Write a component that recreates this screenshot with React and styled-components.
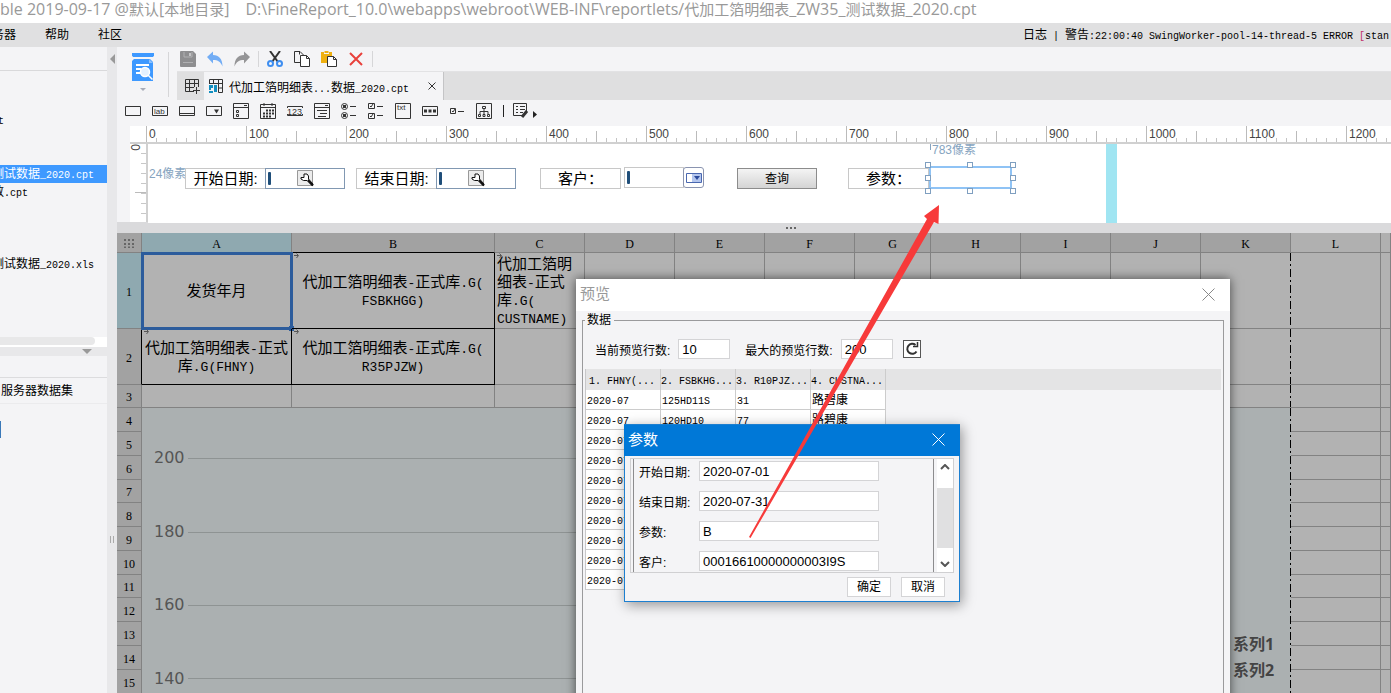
import React from 'react';
import styled, { createGlobalStyle, css } from 'styled-components';

const GlobalStyle = createGlobalStyle`
  * {
    box-sizing: border-box;
  }
  body {
    margin: 0;
    overflow: hidden;
    font-family: 'Liberation Sans', 'Noto Sans CJK SC', sans-serif;
    font-size: 12px;
    color: #000;
    background-color: #f4f4f6;
  }
  button, input {
    font: inherit;
    color: inherit;
    margin: 0;
    padding: 0;
  }
`;

const Page = styled.div`
  position: relative;
  display: flex;
  flex-direction: column;
  height: 100vh;
  overflow: hidden;
`;

const Latin = styled.span`
  font-family: 'Liberation Mono', monospace;
  font-size: ${({ $big }) => ($big ? '13px' : '10px')};
  line-height: 0;
  white-space: pre;
`;

const TitleLatin = styled.span`
  font-size: 16px;
`;

// half-width characters go in a face of their own, the rest stays as it is
const Mixed = ({ children, big, as: Part = Latin }) =>
  children
    .split(/([\x20-\x7e]+)/)
    .filter(Boolean)
    .map((part, i) =>
      /[\x20-\x7e]/.test(part) ? (
        <Part key={i} $big={big}>
          {part}
        </Part>
      ) : (
        <React.Fragment key={i}>{part}</React.Fragment>
      )
    );

/* title and menu */
const TitleBar = styled.header`
  display: flex;
  flex: none;
  gap: 16px;
  height: 23px;
  line-height: 18px;
  background-color: #fff;
  color: #999;
  font-family: 'Open Sans', 'Noto Sans CJK SC', sans-serif;
  font-size: 15px;
  white-space: pre;
`;

const MenuBar = styled.nav`
  display: flex;
  flex: none;
  align-items: center;
  justify-content: space-between;
  height: 24px;
  background-color: #e0e0e1;
  white-space: nowrap;
  overflow: hidden;
`;

const MenuList = styled.div`
  display: flex;
  gap: 29px;
  margin-left: -20px;
`;

const MenuItem = styled.button`
  border: 0;
  background: none;
  line-height: 16px;
`;

const LogText = styled.div`
  display: flex;
  width: 368px;
  line-height: 16px;
  white-space: pre;
  .stack {
    color: #c0306a;
  }
`;

const Workspace = styled.div`
  display: flex;
  flex: 1;
  min-height: 0;
`;

/* left side */
const SidePanel = styled.aside`
  display: flex;
  flex-direction: column;
  flex: none;
  width: 107px;
  overflow: hidden;
`;

const SideTop = styled.div`
  flex: none;
  height: 24px;
  border-bottom: 1px solid #d9d9db;
`;

const FileList = styled.ul`
  flex: none;
  height: 266px;
  margin: 0;
  padding: 40px 0 0;
  list-style: none;
`;

const FileRow = styled.li`
  height: 18px;
  line-height: 18px;
  text-indent: ${({ $cut }) => ($cut ? '-2px' : '-8px')};
  white-space: nowrap;
  ${({ $selected }) =>
    $selected &&
    css`
      background-color: #3e99ff;
      color: #fff;
    `}
`;

const ScrollTrack = styled.div`
  flex: none;
  height: 10px;
  background-color: #fff;
  &::before {
    content: '';
    display: block;
    width: 95px;
    height: 8px;
    border-radius: 0 4px 4px 0;
    background-color: #e8e8e9;
  }
`;

const SideSplit = styled.div`
  display: flex;
  flex: none;
  justify-content: flex-end;
  align-items: center;
  height: 9px;
  padding-right: 15px;
  background-color: #e8e8ea;
`;

const DataTabs = styled.div`
  flex: none;
  height: 48px;
  border-bottom: 1px solid #ebebed;
  div {
    height: 22px;
    border-bottom: 1px solid #dcdcde;
  }
  p {
    margin: 0;
    padding-left: 1px;
    line-height: 26px;
    white-space: nowrap;
  }
`;

const DataMark = styled.div`
  width: 1px;
  height: 17px;
  margin-top: 17px;
  background-color: #3a78b8;
`;

const Gutter = styled.div`
  display: flex;
  flex-direction: column;
  justify-content: space-between;
  align-items: center;
  flex: none;
  width: 10px;
  padding: 7px 0 150px;
  background-color: #e8e8ea;
`;

/* toolbars */
const Main = styled.main`
  display: flex;
  flex-direction: column;
  flex: 1;
  min-width: 0;
`;

const TopTools = styled.div`
  display: flex;
  flex: none;
  height: 53px;
`;

const PreviewButton = styled.button`
  flex: none;
  width: 52px;
  height: 45px;
  margin: 5px 8px 0 0;
  border: 0;
  border-right: 1px solid #d6d6d8;
  background: none;
`;

const ToolRows = styled.div`
  flex: 1;
  min-width: 0;
`;

const ToolRow = styled.div`
  display: flex;
  align-items: center;
  height: 24px;
  margin-left: -3px;
`;

const WidgetRow = styled(ToolRow)`
  flex: none;
  height: 26px;
  margin: 0;
  padding: 0 0 4px 2px;
`;

const IconButton = styled.button`
  display: flex;
  align-items: center;
  justify-content: center;
  flex: none;
  width: 27px;
  height: 22px;
  border: 0;
  background: none;
`;

const ToolSep = styled.span`
  width: 1px;
  height: ${({ $dark }) => ($dark ? '12px' : '16px')};
  margin: ${({ $dark }) => ($dark ? '0 7px 0 6px' : '0 2px 0 3px')};
  background-color: ${({ $dark }) => ($dark ? '#222' : '#d6d6d8')};
`;

const TabRow = styled.div`
  display: flex;
  height: 29px;
  border-top: 1px solid #e2e2e4;
  background-color: #dfdfe0;
`;

const NewTab = styled(IconButton)`
  height: 28px;
  padding-left: 4px;
`;

const Tab = styled.div`
  display: flex;
  align-items: center;
  width: 240px;
  padding: 0 5px;
  gap: 6px;
  background-color: #f4f4f6;
  border-right: 1px solid #c4c4c6;
  white-space: nowrap;
  button {
    width: 12px;
    margin-left: auto;
    border: 0;
    background: none;
    line-height: 0;
  }
`;

/* parameter form */
const Ruler = styled.div`
  display: flex;
  flex: none;
  height: 18px;
  margin-left: 13px;
  padding-left: 16px;
  overflow: hidden;
  background-color: #fff;
  border-bottom: 2px solid #d0d0d0;
`;

const RulerPart = styled.div`
  flex: none;
  width: 100px;
  padding-left: 3px;
  line-height: 17px;
  color: #444;
  background-image: linear-gradient(#bbb, #bbb), linear-gradient(#bbb, #bbb),
    repeating-linear-gradient(90deg, #c4c4c4 0 1px, transparent 1px 10px);
  background-size: 1px 100%, 1px 11px, 100% 4px;
  background-position: 0 0, 50px 100%, 0 100%;
  background-repeat: no-repeat;
`;

const FormArea = styled.div`
  display: flex;
  flex: none;
  height: 79px;
  padding-left: 13px;
`;

const SideRuler = styled.div`
  flex: none;
  width: 18px;
  border-right: 2px solid #d0d0d0;
  background-color: #fff;
  background-image: linear-gradient(#bbb, #bbb),
    repeating-linear-gradient(transparent 0 9px, #c8c8c8 9px 10px);
  background-size: 11px 1px, 5px 100%;
  background-position: 100% 48px, 100% 0;
  background-repeat: no-repeat;
  span {
    display: block;
    width: 10px;
    line-height: 10px;
    color: #444;
    writing-mode: vertical-rl;
    text-orientation: sideways;
  }
`;

const Canvas = styled.div`
  position: relative;
  flex: 1;
  overflow: hidden;
  background-color: #fff;
`;

const Placed = styled.div`
  position: absolute;
  left: ${({ $x }) => $x}px;
  top: ${({ $y = 24 }) => $y}px;
`;

const FormLabel = styled.label`
  display: block;
  width: 81px;
  height: 21px;
  border: 1px solid #c8c8c8;
  font-size: 15px;
  line-height: 19px;
  text-align: center;
  white-space: nowrap;
`;

const FormField = styled.div`
  display: flex;
  align-items: center;
  gap: 26px;
  width: ${({ $narrow }) => ($narrow ? '60px' : '80px')};
  height: 21px;
  padding-left: 2px;
  border: 1px solid ${({ $narrow }) => ($narrow ? '#c8c8c8' : '#8198b2')};
  input {
    width: 3px;
    height: 13px;
    border: 0;
    border-radius: 1px;
    background-color: #1f4e79;
  }
`;

const DropButton = styled.button`
  display: flex;
  align-items: center;
  justify-content: center;
  width: 21px;
  height: 21px;
  border: 1px solid #8a94b0;
  border-radius: 3px;
  background-color: #fff;
`;

const QueryButton = styled.button`
  width: 80px;
  height: 21px;
  border: 1px solid #8c8c8c;
  background: linear-gradient(#f4f4f4, #d4d4d4);
  line-height: 18px;
`;

const Measure = styled.span`
  color: #86a4c0;
  line-height: 14px;
  white-space: nowrap;
`;

const SelectedInput = styled.input`
  display: block;
  width: 83px;
  height: 23px;
  border: 2px solid #8fc3f5;
  background-color: #fff;
  outline: none;
`;

const Handle = styled.span`
  position: absolute;
  left: ${({ $x }) => $x}px;
  top: ${({ $y }) => $y}px;
  width: 6px;
  height: 6px;
  border: 1px solid #7f9fc0;
  background-color: #fff;
`;

const FormEdge = styled.div`
  position: absolute;
  left: 958px;
  top: 0;
  bottom: 0;
  width: 11px;
  background-color: #a0e5f2;
`;

const Splitter = styled.div`
  flex: none;
  display: flex;
  justify-content: center;
  align-items: center;
  gap: 2px;
  height: 11px;
  margin-top: -1px;
  padding-left: 74px;
  background-color: #dadadc;
  i {
    width: 2px;
    height: 2px;
    background-color: #666;
  }
`;

/* report sheet */
const SheetWrap = styled.div`
  flex: 1;
  min-height: 0;
  overflow: hidden;
  background-color: #b2b2b2;
`;

const Sheet = styled.table`
  width: 100%;
  table-layout: fixed;
  border-spacing: 0;
  th,
  td {
    padding: 0;
    border: 0 solid #828282;
    border-width: 0 1px 1px 0;
    overflow: hidden;
  }
`;

const Head = styled.th`
  height: ${({ $h = 20 }) => $h}px;
  background-color: ${({ $on, $out }) => ($on ? '#8fa9b0' : $out ? '#b0b0b0' : '#a2a2a2')};
  font: 12px 'Liberation Serif', serif;
  line-height: 16px;
  &&& {
    padding-top: 2px;
    ${({ $under }) => $under && 'border-bottom-color: #000;'}
    ${({ $side }) => $side && 'border-right-color: #000;'}
  }
`;

const Cell = styled.td`
  position: relative;
  font-size: 15px;
  line-height: 18px;
  text-align: ${({ $left }) => ($left ? 'left' : 'center')};
  white-space: nowrap;
  &&& {
    overflow: visible;
    ${({ $boxed }) => $boxed && 'border-color: #000;'}
    ${({ $left }) => $left && 'padding-left: 2px;'}
    ${({ $edge }) =>
      $edge &&
      css`
        border-right: 0;
        background-image: repeating-linear-gradient(
          #000 0 8px,
          transparent 8px 11px,
          #000 11px 13px,
          transparent 13px 16px
        );
        background-size: 1px 100%;
        background-position: 100% 0;
        background-repeat: no-repeat;
      `}
  }
`;

const ChartCell = styled(Cell)`
  background-color: #abb0b1;
  vertical-align: top;
  svg {
    display: block;
  }
`;

const Selection = styled.div`
  position: absolute;
  inset: -1px -2px -2px -1px;
  border: 3px solid #2c5c9c;
  &::after {
    content: '';
    position: absolute;
    right: -4px;
    bottom: -4px;
    width: 5px;
    height: 5px;
    background-color: #2c5c9c;
  }
`;

const Expand = styled.svg`
  position: absolute;
  left: 1px;
  top: 0;
`;

/* windows */
const PreviewWindow = styled.section`
  position: absolute;
  left: 576px;
  top: 279px;
  bottom: -30px;
  display: flex;
  flex-direction: column;
  width: 654px;
  padding: 0 6px;
  background-color: #f4f4f6;
  box-shadow: 0 0 10px rgba(0, 0, 0, 0.6);
`;

const WindowTitle = styled.div`
  display: flex;
  flex: none;
  align-items: center;
  justify-content: space-between;
  height: ${({ $active }) => ($active ? '31px' : '32px')};
  margin: 0 -6px;
  padding: 0 15px 2px 4px;
  background-color: ${({ $active }) => ($active ? '#0078d7' : '#fff')};
  color: ${({ $active }) => ($active ? '#fff' : '#999')};
  font-size: 15px;
  line-height: 20px;
  button {
    border: 0;
    background: none;
    line-height: 0;
  }
`;

const Group = styled.fieldset`
  flex: 1;
  min-width: 0;
  margin: 0;
  padding: 0 2px;
  border: 1px solid #9a9a9c;
  legend {
    padding: 0 3px 0 2px;
    line-height: 18px;
  }
`;

const CountRow = styled.div`
  display: flex;
  align-items: center;
  padding: 10px;
  gap: 8px;
  input {
    width: 52px;
    margin-right: 7px;
  }
`;

const TextInput = styled.input`
  height: 20px;
  padding: 0 3px;
  border: 1px solid #d4d4d6;
  background-color: #fff;
  font-size: 13px;
  outline: none;
`;

const RefreshButton = styled.button`
  width: 18px;
  height: 18px;
  margin-left: -5px;
  border: 1px solid #555;
  background-color: #fff;
  line-height: 0;
`;

const DataScroll = styled.div`
  border-left: 1px solid #c8c8ca;
  background-image: linear-gradient(#e4e4e5, #e4e4e5);
  background-size: 100% 21px;
  background-repeat: no-repeat;
`;

const DataTable = styled.table`
  width: 300px;
  table-layout: fixed;
  border-spacing: 0;
  th,
  td {
    height: 20px;
    padding: 0 0 0 1px;
    border-right: 1px solid #ccc;
    line-height: 16px;
    text-align: left;
    font-weight: normal;
    white-space: nowrap;
    overflow: hidden;
  }
  th {
    height: 21px;
    padding-left: 0;
  }
  th:first-child {
    padding-left: 3px;
  }
  td {
    border-bottom: 1px solid #ccc;
    background-color: #fff;
  }
`;

const ParamWindow = styled.section`
  position: absolute;
  left: 624px;
  top: 424px;
  width: 336px;
  padding: 0 5px 4px;
  border: 1px solid #1c7fd0;
  background-color: #f4f4f6;
  box-shadow: 2px 3px 12px rgba(0, 0, 0, 0.4);
`;

const ParamScroll = styled.div`
  display: flex;
  height: 115px;
  margin: 2px 0 4px;
  border: 1px solid #d0d0d2;
  overflow: hidden;
`;

const ParamList = styled.div`
  flex: 1;
  margin-left: 2px;
  padding: 2px 0 0 5px;
  border: 0 solid #8c8c8e;
  border-width: 0 1px;
`;

const ParamRow = styled.div`
  display: flex;
  align-items: center;
  height: 20px;
  margin-bottom: 10px;
  label {
    width: 60px;
  }
  input {
    width: 180px;
  }
`;

const ScrollColumn = styled.div`
  display: flex;
  flex-direction: column;
  justify-content: space-between;
  align-items: center;
  width: 16px;
  margin-left: 3px;
  background: linear-gradient(#e0e0e1, #e0e0e1) 0 29px / 100% 60px no-repeat #fff;
  button {
    height: 16px;
    border: 0;
    background: none;
    line-height: 0;
  }
`;

const ParamActions = styled.div`
  display: flex;
  justify-content: flex-end;
  gap: 10px;
  padding-right: 9px;
`;

const ActionButton = styled.button`
  width: 44px;
  height: 20px;
  border: 1px solid #d4d4d6;
  background-color: #fff;
  line-height: 16px;
`;

const Pointer = styled.svg`
  position: absolute;
  left: 740px;
  top: 200px;
  pointer-events: none;
`;

/* icons */
const Svg = ({ w = 16, h = 16, children, ...rest }) => (
  <svg width={w} height={h} viewBox={`0 0 ${w} ${h}`} fill="none" stroke="#333" aria-hidden="true" {...rest}>
    {children}
  </svg>
);

const CloseIcon = ({ size = 13, color = '#888' }) => (
  <Svg w={size} h={size} stroke={color}>
    <path d={`M.5 .5L${size - 0.5} ${size - 0.5}M${size - 0.5} .5L.5 ${size - 0.5}`} />
  </Svg>
);

const PreviewIcon = () => (
  <Svg w={22} h={40} stroke="none">
    <path d="M0 0h22v2.500l-1 1.500H1L0 2.500z" fill="#3e99ff" />
    <path d="M2 6h16l3 3v19H0V8z" fill="#3e99ff" />
    <path d="M17 6v4h4z" fill="#8cc2ff" />
    <path d="M4 12h13M4 16h5M4 20h4" stroke="#fff" strokeWidth="2" />
    <circle cx="13" cy="19" r="4.500" fill="#e4f1ff" stroke="#fff" strokeWidth="1.500" />
    <path d="M16 22l4.500 4.500" stroke="#fff" strokeWidth="1.500" />
    <path d="M8 35h6l-3 3z" fill="#a8acb8" />
  </Svg>
);

const SaveIcon = () => (
  <Svg stroke="none">
    <path d="M0 1q0-1 1-1h12l3 3v12q0 1-1 1H1q-1 0-1-1z" fill="#8e8e90" />
    <path d="M4 1v5h8V1M3 11.500h10" stroke="#b0b0b2" />
    <path d="M9 2h2v3H9z" fill="#c4c4c6" />
  </Svg>
);

const UndoIcon = () => (
  <Svg stroke="none">
    <path d="M0 6L6 .5v3.500c6 0 9.500 4 9.500 11.500C13.500 10.500 11 9 6 9v3.500z" fill="#73adf5" />
  </Svg>
);

const RedoIcon = () => (
  <Svg stroke="none">
    <path d="M16 6L10 .5v3.500C4 4 .5 8 .5 15.500 2.500 10.500 5 9 10 9v3.500z" fill="#959597" />
  </Svg>
);

const CutIcon = () => (
  <Svg strokeWidth="2">
    <path d="M3 0l8 11M13 0L5 11" />
    <circle cx="3.500" cy="12.500" r="2.500" stroke="#3e8ef0" />
    <circle cx="12.500" cy="12.500" r="2.500" stroke="#3e8ef0" />
  </Svg>
);

const CopyIcon = () => (
  <Svg>
    <path d="M6 11.500H.5V.5H6L9.500 4" />
    <path d="M6.500 4.500h6l3 3v8h-9z" fill="#fff" />
    <path d="M12.500 4.500v3h3M5.500 .5v3" />
  </Svg>
);

const PasteIcon = () => (
  <Svg>
    <path d="M0 1h3v2h5V1h3v11H0z" fill="#efb010" stroke="none" />
    <path d="M3.500 0h4v2h-4z" fill="#efb010" stroke="none" />
    <path d="M6.500 5.500h6l3 3v7h-9z" fill="#fff" />
    <path d="M12.500 5.500v3h3" />
  </Svg>
);

const DeleteIcon = () => (
  <Svg stroke="#e8413c" strokeWidth="2">
    <path d="M2 2l12 12M14 2L2 14" />
  </Svg>
);

const NewSheetIcon = () => (
  <Svg w={15} h={15}>
    <path d="M9 12.500H.5V.5h13V8M.5 4.500h13M.5 8.500H9M4.500 .5v12M9.500 .5V8M11.500 8v7M8 11.500h7" />
  </Svg>
);

const SheetIcon = () => (
  <Svg w={14} h={14}>
    <path d="M.5 5V.5h13v13h-4v-9M4.500 .5v4M9.500 .5v4M.5 4.500h13M9.500 9h4" />
    <path d="M0 6h4v3H2v2H0zM5 6h3v7H5zM0 12h4v2H0z" fill="#148fbf" stroke="none" />
  </Svg>
);

const iconText = { stroke: 'none', fill: '#333', fontFamily: 'Liberation Sans, sans-serif' };

const widgetIcons = [
  ['标签框', <path d="M.5 3.500h15v9H.5z" />],
  ['文本', <><path d="M.5 3.500h15v9H.5z" /><text x="2" y="11" fontSize="8" {...iconText}>lab</text></>],
  ['按钮', <path d="M.5 3.500h15v9H.5zM.5 10.500h15" />],
  ['下拉框', <><path d="M.5 3.500h15v9H.5z" /><path d="M8 6.500h5l-2.500 4z" fill="#333" stroke="none" /></>],
  ['下拉复选框', <path d="M.5 .5h15v15H.5zM.5 4.500h15M11 2.500h3M3.500 7.500h2v2h-2zM3.500 11.500h2v2h-2z" />],
  ['日期', <><path d="M.5 1.500h15v14H.5zM.5 4.500h15M4 0v3M12 0v3" /><path d="M6 7.500h8M3 10.500h11M3 13.500h8" strokeWidth="2" strokeDasharray="2 1" /></>],
  ['数字', <><path d="M15.500 5V3.500H.5V5M.5 11v1.500h15V11" /><text x="0" y="11.500" fontSize="9" {...iconText}>123</text></>],
  ['列表', <path d="M.5 .5h15v15H.5zM.5 4.500h15M11 2.500h3M3 7.500h10M6 10.500h7M4 13.500h8" />],
  ['单选组', <><circle cx="3.500" cy="3.500" r="3" /><circle cx="3.500" cy="12.500" r="3" /><path d="M2 3.500h3M2 12.500h3" strokeWidth="3" /><path d="M9 3.500h6M9 12.500h6" /></>],
  ['复选组', <path d="M.5 .5h6v5h-6zM.5 10.500h6v5h-6zM2 3l1 1 2-3M2 13l1 1 2-3M9 3.500h6M9 12.500h6" />],
  ['文本域', <><path d="M.5 .5h15v15H.5z" /><text x="2" y="7" fontSize="8" {...iconText}>txt</text></>],
  ['密码', <><path d="M.5 3.500h15v9H.5z" /><path d="M2 8h12" strokeWidth="3" strokeDasharray="3 1.500" /></>],
  ['复选框', <path d="M1.500 5.500h5v5h-5zM3 8l1 1 2-3M9 8.500h6" />],
  ['树', <path d="M.5 .5h15v15H.5zM6.500 3.500h3v2h-3zM8 6v5M4 11V8.500h8V11M2.500 11.500h2v2h-2zM7 11.500h2v2H7zM11.500 11.500h2v2h-2z" />],
];

const WrenchIcon = () => (
  <Svg w={17} h={17}>
    <path d="M.5 .5h15v15H.5z" fill="#ececec" stroke="#999" />
    <path d="M4 7.500h3v-3.500h3l1.500 2v3l4.500 5-1 1.500-5-5H6.500L4 9z" fill="#fff" stroke="#111" />
    <path d="M11 10l5 5.500" stroke="#111" strokeWidth="2" />
  </Svg>
);

const DownRight = () => (
  <Expand width="7" height="7" viewBox="0 0 7 7" fill="none" stroke="#555">
    <path d="M1 2.500h4M3.500 .5L5.500 2.500 3.500 5" />
  </Expand>
);

const columns = [25, 150, 203, 90, 90, 90, 90, 76, 90, 90, 90, 90, 90];
const letters = 'ABCDEFGHIJKL'.split('');
const lowerRows = [24, 24, 24, 23, 24, 24, 24, 23, 24, 24, 24, 24];
const restCells = ['D', 'E', 'F', 'G', 'H', 'I', 'J', 'K', 'L', 'M'];

const files = ['t', '', '', '测试数据_2020.cpt', '数.cpt', '', '', '', '测试数据_2020.xls'];

const previewRows = [
  ['2020-07', '125HD11S', '31', '路碧康'],
  ['2020-07', '120HD10', '77', '路碧康'],
  ...Array.from({ length: 8 }, () => ['2020-07', '', '', '']),
];

const params = [
  ['开始日期:', '2020-07-01'],
  ['结束日期:', '2020-07-31'],
  ['参数:', 'B'],
  ['客户:', '00016610000000003I9S'],
];

const handles = [[-4, -4], [38, -4], [81, -4], [-4, 9], [81, 9], [-4, 22], [38, 22], [81, 22]];

const RestOfRow = () =>
  restCells.map((name) => <Cell key={name} $edge={name === 'K'} />);

const Sidebar = () => (
  <SidePanel>
    <SideTop />
    <FileList>
      {files.map((file, i) => (
        <FileRow key={i} $selected={i === 3} $cut={i === 0}>
          <Mixed>{file}</Mixed>
        </FileRow>
      ))}
    </FileList>
    <ScrollTrack />
    <SideSplit>
      <Svg w={10} h={5} stroke="none">
        <path d="M0 0h10L5 5z" fill="#999" />
      </Svg>
    </SideSplit>
    <DataTabs>
      <div />
      <p>服务器数据集</p>
    </DataTabs>
    <DataMark />
  </SidePanel>
);

const Toolbars = () => (
  <>
    <TopTools>
      <PreviewButton aria-label="预览">
        <PreviewIcon />
      </PreviewButton>
      <ToolRows>
        <ToolRow>
          <IconButton aria-label="保存"><SaveIcon /></IconButton>
          <IconButton aria-label="撤销"><UndoIcon /></IconButton>
          <IconButton aria-label="重做"><RedoIcon /></IconButton>
          <ToolSep />
          <IconButton aria-label="剪切"><CutIcon /></IconButton>
          <IconButton aria-label="复制"><CopyIcon /></IconButton>
          <IconButton aria-label="粘贴"><PasteIcon /></IconButton>
          <IconButton aria-label="删除"><DeleteIcon /></IconButton>
          <ToolSep />
        </ToolRow>
        <TabRow>
          <NewTab aria-label="新建"><NewSheetIcon /></NewTab>
          <Tab>
            <SheetIcon />
            <span><Mixed>代加工箔明细表...数据_2020.cpt</Mixed></span>
            <button aria-label="关闭"><CloseIcon size={8} color="#333" /></button>
          </Tab>
        </TabRow>
      </ToolRows>
    </TopTools>
    <WidgetRow>
      {widgetIcons.map(([name, shape]) => (
        <IconButton key={name} aria-label={name}>
          <Svg>{shape}</Svg>
        </IconButton>
      ))}
      <ToolSep $dark />
      <IconButton aria-label="更多">
        <Svg w={24} h={16}>
          <path d="M9 12.500H.5V.5h13V8M3 3.500h2M3 6.500h2M3 9.500h2M7 3.500h5M7 6.500h5M7 9.500h3" />
          <path d="M14 8l-5 6" strokeWidth="3" />
          <path d="M20 8v7l4-3.500z" fill="#222" stroke="none" />
        </Svg>
      </IconButton>
    </WidgetRow>
  </>
);

const ParameterForm = () => (
  <>
    <Ruler>
      {Array.from({ length: 13 }, (_, i) => (
        <RulerPart key={i}>{i * 100}</RulerPart>
      ))}
    </Ruler>
    <FormArea>
      <SideRuler><span>0</span></SideRuler>
      <Canvas>
        <Placed as={Measure} $x={1} $y={23}>24像素</Placed>
        <Placed $x={37}><FormLabel htmlFor="from">开始日期:</FormLabel></Placed>
        <Placed $x={117}>
          <FormField><input id="from" /><WrenchIcon /></FormField>
        </Placed>
        <Placed $x={208}><FormLabel htmlFor="to">结束日期:</FormLabel></Placed>
        <Placed $x={288}>
          <FormField><input id="to" /><WrenchIcon /></FormField>
        </Placed>
        <Placed $x={392}><FormLabel htmlFor="customer">客户：</FormLabel></Placed>
        <Placed $x={476} $y={23}>
          <FormField $narrow><input id="customer" /></FormField>
        </Placed>
        <Placed $x={535} $y={23}>
          <DropButton aria-label="选择客户">
            <Svg w={16} h={10} stroke="#4a68b0">
              <path d="M.5 .5h15v9H.5z" />
              <path d="M6 1h9v8H6z" fill="#b4c6ee" stroke="none" />
              <path d="M8 3h6l-3 4z" fill="#2b4a9c" stroke="none" />
            </Svg>
          </DropButton>
        </Placed>
        <Placed $x={589}><QueryButton>查询</QueryButton></Placed>
        <Placed $x={700}><FormLabel htmlFor="param">参数：</FormLabel></Placed>
        <Placed as={Measure} $x={784} $y={-1}>783像素</Placed>
        <Placed as="svg" $x={782} $y={0} width="1" height="6"><path d="M.5 0v6" stroke="#86a4c0" /></Placed>
        <Placed $x={781} $y={22}>
          <SelectedInput id="param" />
          {handles.map(([x, y]) => <Handle key={`${x},${y}`} $x={x} $y={y} />)}
        </Placed>
        <FormEdge />
      </Canvas>
    </FormArea>
    <Splitter><i /><i /><i /></Splitter>
  </>
);

const Chart = () => (
  <svg width="1149" height="284" fontFamily="DejaVu Sans, sans-serif" fontSize="16" fill="#555">
    {[200, 180, 160, 140].map((value, i) => (
      <g key={value}>
        <text x="12" y={[55, 129, 202, 276][i]}>{value}</text>
        <path d={`M46 ${[50, 124, 197, 270][i]}.5H1070`} stroke="#8e9393" />
      </g>
    ))}
    <g fontFamily="Open Sans, Noto Sans CJK SC, sans-serif" fontWeight="bold" fill="#444">
      <text x="1091" y="242">系列1</text>
      <text x="1091" y="268">系列2</text>
    </g>
  </svg>
);

const ReportSheet = () => (
  <SheetWrap>
    <Sheet>
      <colgroup>
        {columns.map((w, i) => <col key={i} width={w} />)}
        <col />
      </colgroup>
      <thead>
        <tr>
          <Head>
            <Svg w={11} h={9} strokeWidth="2" stroke="#666" strokeDasharray="2 2">
              <path d="M0 1h11M0 5h11M0 8.500h11" />
            </Svg>
          </Head>
          {letters.map((c) => (
            <Head key={c} $on={c === 'A'} $out={c === 'L'} $under={c === 'B'}>{c}</Head>
          ))}
          <Head $out />
        </tr>
      </thead>
      <tbody>
        <tr>
          <Head $h={76} $on>1</Head>
          <Cell $boxed>发货年月<Selection /></Cell>
          <Cell $boxed>
            <DownRight />
            <Mixed big>代加工箔明细表-正式库.G(</Mixed><br /><Mixed big>FSBKHGG)</Mixed>
          </Cell>
          <Cell $left>
            <DownRight />
            代加工箔明<br /><Mixed big>细表-正式</Mixed><br /><Mixed big>库.G(</Mixed><br /><Mixed big>CUSTNAME)</Mixed>
          </Cell>
          <RestOfRow />
        </tr>
        <tr>
          <Head $h={56} $side>2</Head>
          <Cell $boxed>
            <DownRight />
            <Mixed big>代加工箔明细表-正式</Mixed><br /><Mixed big>库.G(FHNY)</Mixed>
          </Cell>
          <Cell $boxed>
            <DownRight />
            <Mixed big>代加工箔明细表-正式库.G(</Mixed><br /><Mixed big>R35PJZW)</Mixed>
          </Cell>
          <Cell />
          <RestOfRow />
        </tr>
        <tr>
          <Head $h={23}>3</Head>
          <Cell /><Cell /><Cell />
          <RestOfRow />
        </tr>
        {lowerRows.map((h, i) => (
          <tr key={i}>
            <Head $h={h}>{i + 4}</Head>
            {i === 0 && (
              <ChartCell $edge colSpan={11} rowSpan={lowerRows.length}><Chart /></ChartCell>
            )}
            <Cell /><Cell />
          </tr>
        ))}
      </tbody>
    </Sheet>
  </SheetWrap>
);

const PreviewDialog = () => (
  <PreviewWindow role="dialog" aria-label="预览">
    <WindowTitle>
      预览
      <button aria-label="关闭"><CloseIcon /></button>
    </WindowTitle>
    <Group>
      <legend>数据</legend>
      <CountRow>
        <label htmlFor="current">当前预览行数:</label>
        <TextInput id="current" defaultValue="10" />
        <label htmlFor="most">最大的预览行数:</label>
        <TextInput id="most" defaultValue="200" />
        <RefreshButton aria-label="刷新">
          <Svg stroke="#333" strokeWidth="2">
            <path d="M12.500 10.500a5 5 0 1 1-1-6.500" />
            <path d="M9 5.500h4.500V1" strokeWidth="1.500" />
          </Svg>
        </RefreshButton>
      </CountRow>
      <DataScroll>
        <DataTable>
          <thead>
            <tr>
              {['1. FHNY(...', '2. FSBKHG...', '3. R10PJZ...', '4. CUSTNA...'].map((t) => (
                <th key={t}><Mixed>{t}</Mixed></th>
              ))}
            </tr>
          </thead>
          <tbody>
            {previewRows.map((row, i) => (
              <tr key={i}>
                {row.map((t, j) => <td key={j}><Mixed>{t}</Mixed></td>)}
              </tr>
            ))}
          </tbody>
        </DataTable>
      </DataScroll>
    </Group>
  </PreviewWindow>
);

const ParamDialog = () => (
  <ParamWindow role="dialog" aria-label="参数">
    <WindowTitle $active>
      参数
      <button aria-label="关闭"><CloseIcon color="#fff" /></button>
    </WindowTitle>
    <ParamScroll>
      <ParamList>
        {params.map(([name, value], i) => (
          <ParamRow key={name}>
            <label htmlFor={`p${i}`}>{name}</label>
            <TextInput id={`p${i}`} defaultValue={value} />
          </ParamRow>
        ))}
      </ParamList>
      <ScrollColumn>
        <button aria-label="向上">
          <Svg w={10} h={6} strokeWidth="2" stroke="#555"><path d="M1 5l4-4 4 4" /></Svg>
        </button>
        <button aria-label="向下">
          <Svg w={10} h={6} strokeWidth="2" stroke="#555"><path d="M1 1l4 4 4-4" /></Svg>
        </button>
      </ScrollColumn>
    </ParamScroll>
    <ParamActions>
      <ActionButton>确定</ActionButton>
      <ActionButton>取消</ActionButton>
    </ParamActions>
  </ParamWindow>
);

const App = () => {
  return (
    <Page>
      <GlobalStyle />
      <TitleBar>
        <span><Mixed as={TitleLatin}>ble 2019-09-17 @默认[本地目录]</Mixed></span>
        <span>
          <Mixed as={TitleLatin}>
            {'D:\\FineReport_10.0\\webapps\\webroot\\WEB-INF\\reportlets/代加工箔明细表_ZW35_测试数据_2020.cpt'}
          </Mixed>
        </span>
      </TitleBar>
      <MenuBar>
        <MenuList>
          <MenuItem>服务器</MenuItem>
          <MenuItem>帮助</MenuItem>
          <MenuItem>社区</MenuItem>
        </MenuList>
        <LogText>
          <span><Mixed>日志 | 警告:22:00:40 SwingWorker-pool-14-thread-5 ERROR </Mixed></span>
          <span className="stack"><Mixed>[</Mixed></span>
          <span><Mixed>stan</Mixed></span>
        </LogText>
      </MenuBar>
      <Workspace>
        <Sidebar />
        <Gutter>
          <Svg w={5} h={10} stroke="none"><path d="M5 0v10L0 5z" fill="#999" /></Svg>
          <Svg w={4} h={7} stroke="#aaa"><path d="M.5 0v7M3.500 0v7" /></Svg>
        </Gutter>
        <Main>
          <Toolbars />
          <ParameterForm />
          <ReportSheet />
        </Main>
      </Workspace>
      <PreviewDialog />
      <ParamDialog />
      <Pointer width="210" height="345" viewBox="0 0 210 345" aria-hidden="true">
        <path d="M199 5L198.500 24 194 22 10.500 338 9 337 187 19 184 16z" fill="#f73a3a" />
      </Pointer>
    </Page>
  );
};

export default App;
